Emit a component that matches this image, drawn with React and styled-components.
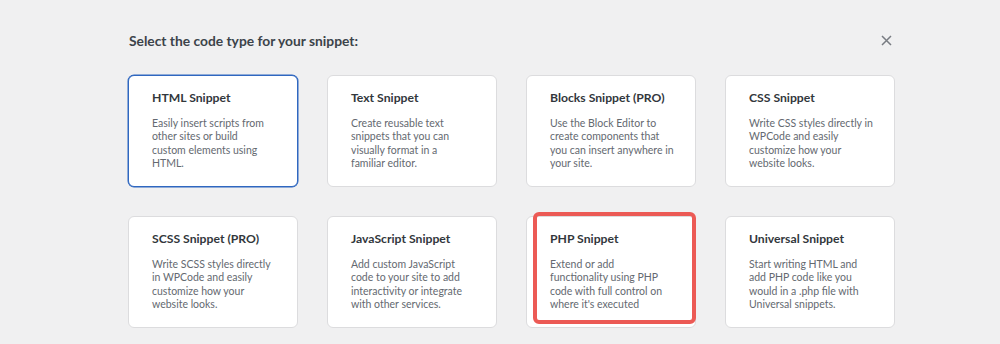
import React from "react";
import styled, { createGlobalStyle } from "styled-components";

const Global = createGlobalStyle`
  html, body { margin: 0; padding: 0; background: #f0f0f1; }
  body { font-family: Lato, "Noto Sans", sans-serif; }
`;

const Page = styled.div`
  width: 1000px;
  height: 344px;
  overflow: hidden;
  padding: 29px 0 0 128px;
  box-sizing: border-box;
`;

const Inner = styled.div`
  width: 767px;
`;

const Header = styled.div`
  display: flex;
  align-items: center;
  justify-content: space-between;
  height: 22px;
  margin-bottom: 24px;
`;

const Heading = styled.h2`
  margin: 0 0 0 1px;
  font-size: 13.8px;
  font-weight: 700;
  color: #3c434a;
`;

const Close = styled.button`
  width: 18px;
  height: 18px;
  padding: 0;
  border: 0;
  background: transparent;
  display: flex;
  align-items: center;
  justify-content: center;
  color: #787c82;
`;

const Grid = styled.div`
  display: grid;
  grid-template-columns: repeat(4, 170px);
  column-gap: 29px;
  row-gap: 29px;
`;

const Card = styled.div`
  position: relative;
  height: 112px;
  box-sizing: border-box;
  background: #fff;
  border: 1px solid ${(p) => (p.$selected ? "#2f67c0" : "#dcdcde")};
  box-shadow: ${(p) => (p.$selected ? "0 0 0 0.5px #2f67c0" : "none")};
  border-radius: 6px;
  padding: 13px 14px 13px 23px;
`;

const Title = styled.h3`
  margin: 0;
  font-size: 12.2px;
  line-height: 18px;
  font-weight: 700;
  color: #32373c;
  white-space: nowrap;
`;

const Desc = styled.p`
  margin: 10px 0 0;
  font-size: 10.5px;
  line-height: 13.4px;
  color: #646970;
`;

const Line = styled.span`
  display: block;
  white-space: nowrap;
`;

const Highlight = styled.div`
  position: absolute;
  top: -5px;
  left: 6px;
  right: -1px;
  bottom: 3px;
  border: 4px solid #ec5a55;
  border-radius: 6px;
  pointer-events: none;
`;

const items = [
  { t: "HTML Snippet", d: ["Easily insert scripts from", "other sites or build", "custom elements using", "HTML."], selected: true },
  { t: "Text Snippet", d: ["Create reusable text", "snippets that you can", "visually format in a", "familiar editor."] },
  { t: "Blocks Snippet (PRO)", d: ["Use the Block Editor to", "create components that", "you can insert anywhere in", "your site."] },
  { t: "CSS Snippet", d: ["Write CSS styles directly in", "WPCode and easily", "customize how your", "website looks."] },
  { t: "SCSS Snippet (PRO)", d: ["Write SCSS styles directly", "in WPCode and easily", "customize how your", "website looks."] },
  { t: "JavaScript Snippet", d: ["Add custom JavaScript", "code to your site to add", "interactivity or integrate", "with other services."] },
  { t: "PHP Snippet", d: ["Extend or add", "functionality using PHP", "code with full control on", "where it's executed"], highlight: true },
  { t: "Universal Snippet", d: ["Start writing HTML and", "add PHP code like you", "would in a .php file with", "Universal snippets."] },
];

export default function App() {
  return (
    <>
      <Global />
      <Page>
        <Inner>
          <Header>
            <Heading>Select the code type for your snippet:</Heading>
            <Close aria-label="Close">
              <svg width="11" height="11" viewBox="0 0 11 11">
                <path d="M1 1L10 10M10 1L1 10" stroke="currentColor" strokeWidth="1.5" />
              </svg>
            </Close>
          </Header>
          <Grid>
            {items.map((it) => (
              <Card key={it.t} $selected={it.selected}>
                <Title>{it.t}</Title>
                <Desc>
                  {it.d.map((l) => (
                    <Line key={l}>{l}</Line>
                  ))}
                </Desc>
                {it.highlight && <Highlight />}
              </Card>
            ))}
          </Grid>
        </Inner>
      </Page>
    </>
  );
}
